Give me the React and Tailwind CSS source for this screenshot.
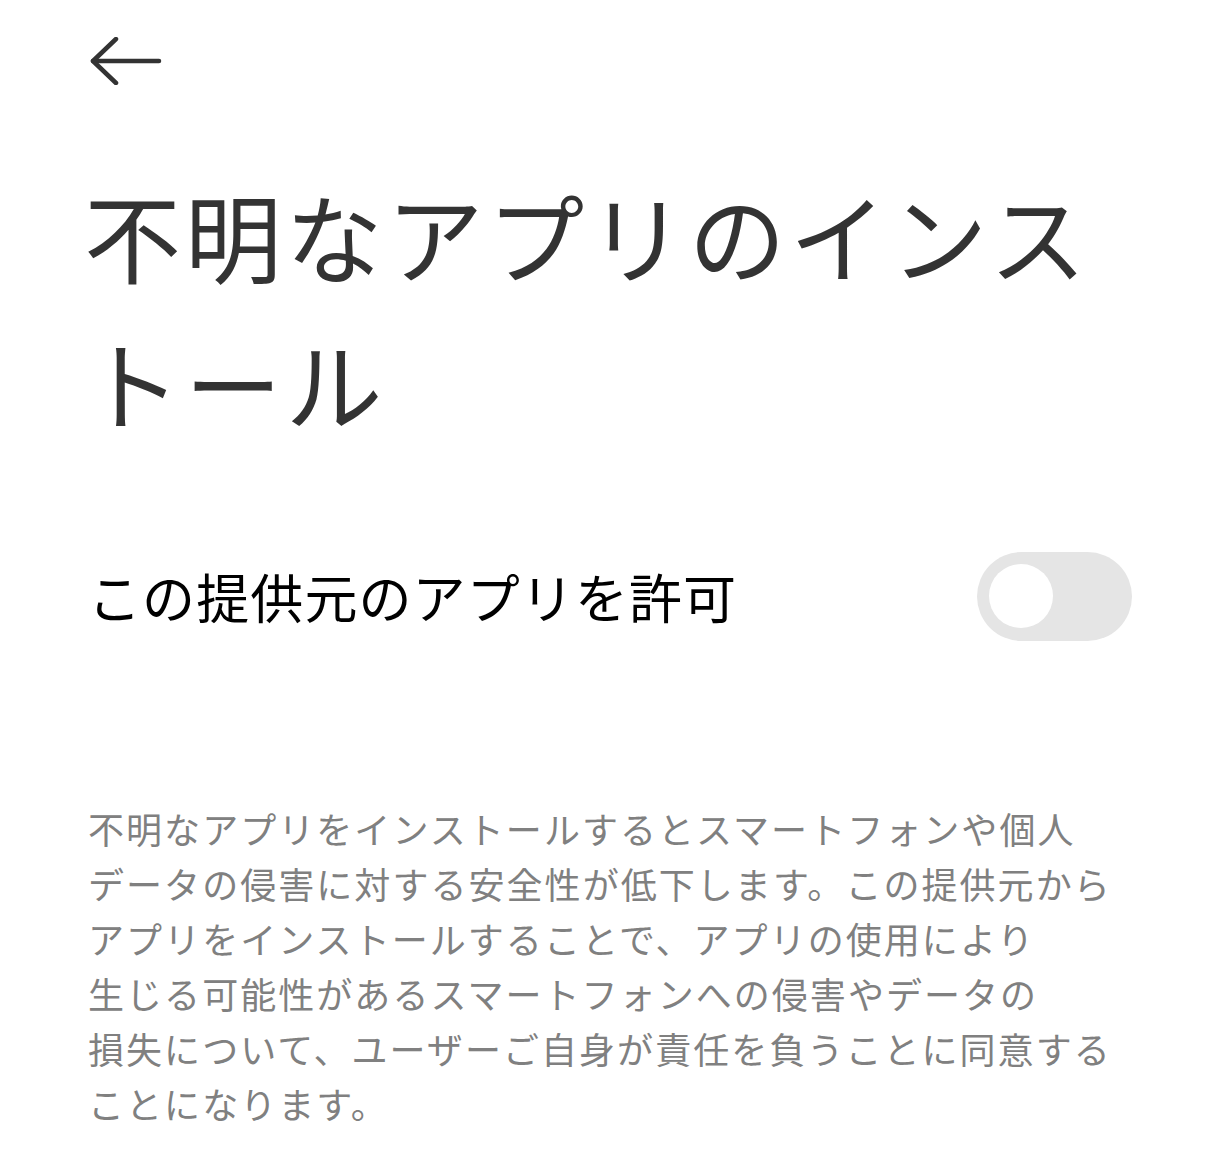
import React, { useState } from "react";

const DESCRIPTION = [
  "不明なアプリをインストールするとスマートフォンや個人",
  "データの侵害に対する安全性が低下します。この提供元から",
  "アプリをインストールすることで、アプリの使用により",
  "生じる可能性があるスマートフォンへの侵害やデータの",
  "損失について、ユーザーご自身が責任を負うことに同意する",
  "ことになります。",
];

function BackArrow() {
  return (
    <svg width="76" height="48" viewBox="0 0 76 48" fill="none" stroke="#333333" strokeWidth="4.5" strokeLinecap="round" strokeLinejoin="round">
      <path d="M5 24 L71 24" />
      <path d="M28 2 L5 24 L28 46" />
    </svg>
  );
}

function Toggle({ on, onChange }) {
  return (
    <button
      onClick={() => onChange(!on)}
      className={`flex h-[89px] w-[155px] shrink-0 items-center rounded-full px-[12px] ${on ? "justify-end bg-[#3478f6]" : "justify-start bg-[#e5e5e5]"}`}
    >
      <span className="block h-[64px] w-[64px] rounded-full bg-white" />
    </button>
  );
}

export default function App() {
  const [allowed, setAllowed] = useState(false);

  return (
    <div
      className="min-h-[1152px] w-[1220px] bg-white px-[88px]"
      style={{ fontFamily: '"Noto Sans CJK JP", "Noto Sans", sans-serif' }}
    >
      {/* header */}
      <div className="pt-[37px]">
        <BackArrow />
      </div>

      {/* title */}
      <h1 className="-ml-[4px] mt-[75px] text-[97px] font-normal leading-[147px] tracking-[3.8px] text-[#333333]">
        不明なアプリのインストール
      </h1>

      {/* allow row */}
      <div className="mt-[82px] flex h-[120px] items-center justify-between">
        <span className="text-[53px] leading-none tracking-[1.1px] text-black">この提供元のアプリを許可</span>
        <Toggle on={allowed} onChange={setAllowed} />
      </div>

      {/* warning text */}
      <div className="mt-[145px] text-[36px] leading-[55px] tracking-[2.05px] text-[#808080]">
        {DESCRIPTION.map((line) => (
          <p key={line} className="whitespace-nowrap">{line}</p>
        ))}
      </div>
    </div>
  );
}
